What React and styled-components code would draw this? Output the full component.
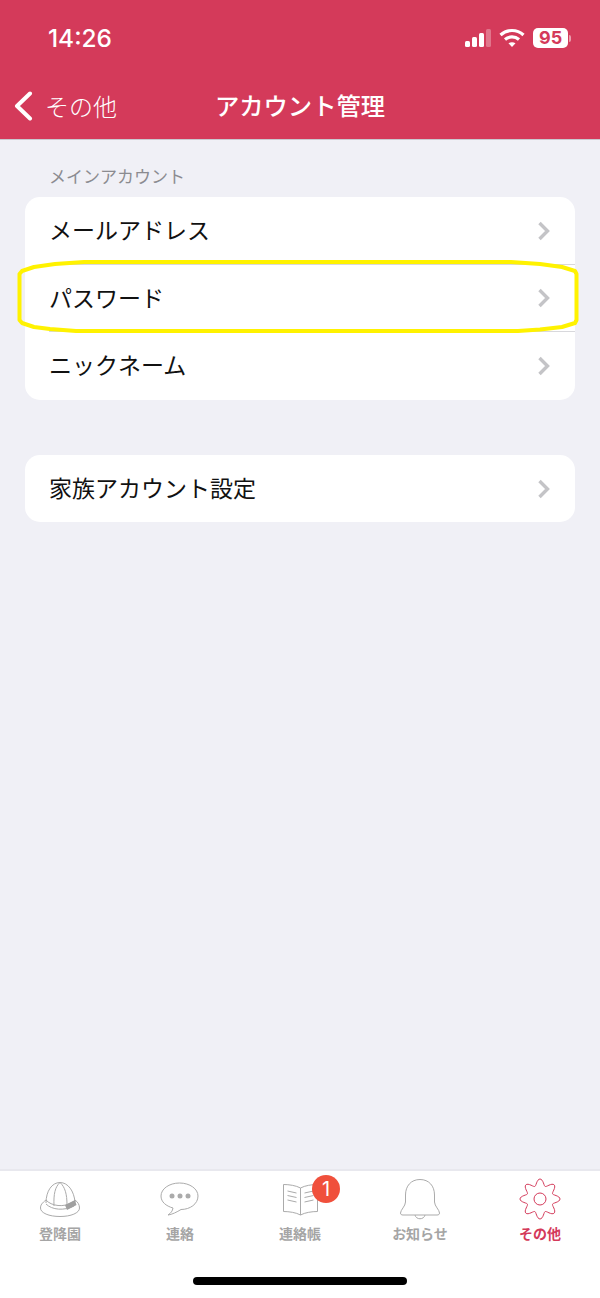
import styled, { createGlobalStyle } from "styled-components";
import { Fragment } from "react";

const Global = createGlobalStyle`
  html, body { margin: 0; padding: 0; background: #f0f0f6; }
  body { font-family: "Noto Sans CJK JP", "Noto Sans", sans-serif; }
`;

const Page = styled.div`
  width: 600px;
  height: 1298px;
  display: flex;
  flex-direction: column;
  background: #f0f0f6;
  overflow: hidden;
`;

const Header = styled.header`
  height: 140px;
  flex: none;
  background: #d43a5a;
  border-bottom: 1px solid #c9c9cf;
  box-sizing: border-box;
  color: #fff;
  display: flex;
  flex-direction: column;
`;

const StatusBar = styled.div`
  height: 76px;
  flex: none;
  display: flex;
  align-items: center;
  justify-content: space-between;
  padding: 0 29px 0 48px;
`;

const Time = styled.span`
  font-family: Inter, sans-serif;
  font-size: 24.4px;
  font-weight: 500;
`;

const StatusIcons = styled.div`
  display: flex;
  align-items: center;
  gap: 8px;
`;

const Battery = styled.div`
  display: flex;
  align-items: center;
  gap: 1px;
`;

const BatteryBody = styled.span`
  width: 35px;
  height: 20px;
  border-radius: 5px;
  background: #fff;
  color: #d43a5a;
  font-family: Inter, sans-serif;
  font-size: 18px;
  font-weight: 700;
  line-height: 20px;
  text-indent: 6px;
`;

const BatteryTip = styled.span`
  width: 2px;
  height: 7px;
  border-radius: 0 2px 2px 0;
  background: rgba(255, 255, 255, 0.5);
`;

const NavBar = styled.nav`
  position: relative;
  flex: 1;
  display: flex;
  align-items: center;
  justify-content: center;
  padding-bottom: 6px;
`;

const BackLink = styled.div`
  position: absolute;
  left: 13px;
  top: 12px;
  display: flex;
  align-items: center;
  gap: 12px;
  font-size: 24px;
  font-weight: 300;
  line-height: 36px;
`;

const Title = styled.h1`
  margin: 0;
  font-size: 24.3px;
  font-weight: 500;
  line-height: 36px;
`;

const Content = styled.main`
  flex: 1;
  padding: 24px 25px 0;
  display: flex;
  flex-direction: column;
`;

const SectionLabel = styled.div`
  padding-left: 24px;
  font-size: 17px;
  line-height: 24px;
  color: #8b8b90;
  margin-bottom: 9px;
`;

const Card = styled.div`
  background: #fff;
  border-radius: 15px;
  overflow: hidden;
  margin-bottom: ${(p) => p.$gap || 0}px;
`;

const Row = styled.div`
  height: 67.6px;
  display: flex;
  align-items: center;
  justify-content: space-between;
  padding: 0 24px 0 24px;
  font-size: 23px;
  color: #111;
`;

const RowLabel = styled.span`
  padding-bottom: 3px;
`;

const Divider = styled.div`
  height: 1px;
  margin-left: 24px;
  margin-top: -1px;
  background: #d8d8dc;
`;

const HighlightMark = styled.svg`
  position: absolute;
  left: 0;
  top: 256px;
  pointer-events: none;
`;

const TabBar = styled.footer`
  position: relative;
  height: 129px;
  flex: none;
  box-sizing: border-box;
  background: #fff;
  border-top: 2px solid #e8e8ee;
  display: grid;
  grid-template-columns: repeat(5, 120px);
`;

const Tab = styled.div`
  position: relative;
  display: flex;
  flex-direction: column;
  align-items: center;
  height: 76px;
  padding-top: 8px;
  box-sizing: border-box;
  color: ${(p) => (p.$active ? "#d43a5a" : "#a5a5a5")};
`;

const TabIcon = styled.svg`
  width: 40px;
  height: 40px;
  flex: none;
  overflow: visible;
`;

const TabLabel = styled.span`
  margin-top: 4px;
  font-size: 14px;
  line-height: 20px;
  font-weight: 700;
`;

const Badge = styled.span`
  position: absolute;
  left: 72px;
  top: 4px;
  width: 28px;
  height: 28px;
  border-radius: 50%;
  background: #f0503c;
  color: #fff;
  font-family: Inter, sans-serif;
  font-size: 20px;
  line-height: 28px;
  text-align: center;
`;

const HomeIndicator = styled.div`
  position: absolute;
  left: 193px;
  top: 106px;
  width: 214px;
  height: 8px;
  border-radius: 4px;
  background: #000;
`;

const Chevron = () => (
  <svg width="14" height="20" viewBox="0 0 14 20" fill="none">
    <path d="M2.500 2 L10.500 10 L2.500 18" stroke="#c4c4c7" strokeWidth="3.400" />
  </svg>
);

const HatIcon = () => (
  <TabIcon viewBox="0 0 40 40" fill="none" stroke="#ababab" strokeWidth="1">
    <path d="M6 24 C6 12 12 3.500 20 3.500 C28 3.500 34 12 35 23" />
    <path d="M20 3.500 C15 8 13.500 15 14 27 M20 3.500 C25 8 27 15 27 26" />
    <path d="M6 21 C11 27 24 29 33 23 M6 25 C12 31 24 32 34 27" />
    <path d="M6 21 C2 24 0.500 26 0.500 29 C0.500 34 9 37.500 20 37.500 C31 37.500 39.500 34 39.500 29 C39.500 26 38 23 35 21" />
    <path d="M25 26 L35 21 L36.500 26 L27 31 Z" fill="#a0a0a0" stroke="none" />
  </TabIcon>
);

const ChatIcon = () => (
  <TabIcon viewBox="0 0 40 40" fill="none" stroke="#ababab" strokeWidth="1">
    <path d="M19.500 4 C30 4 38 10 38 17 C38 25 30 30.500 21 30.500 C17 33 12 35.500 8 36 C11 34 12.500 32 13 29 C6 27 1 23 1 17 C1 10 9 4 19.500 4 Z" />
    <circle cx="12" cy="17" r="2.500" fill="#ababab" stroke="none" />
    <circle cx="20" cy="17" r="2.500" fill="#ababab" stroke="none" />
    <circle cx="28" cy="17" r="2.500" fill="#ababab" stroke="none" />
  </TabIcon>
);

const BookIcon = () => (
  <TabIcon viewBox="0 0 40 40" fill="none" stroke="#ababab" strokeWidth="1">
    <path d="M20.500 9 C16 6.500 9 5.500 3.500 5.500 L3.500 32.500 C9 32.500 16 33.500 20.500 36 C25 33.500 32 32.500 37.500 32.500 L37.500 5.500 C32 5.500 25 6.500 20.500 9 Z" />
    <path d="M20.500 9 L20.500 36" />
    <path d="M7.500 12 L16.500 14 M7.500 16.500 L16.500 18.500 M7.500 21 L16.500 23 M24.500 14 L33.500 12 M24.500 18.500 L33.500 16.500 M24.500 23 L33.500 21" />
  </TabIcon>
);

const BellIcon = () => (
  <TabIcon viewBox="0 0 40 40" fill="none" stroke="#ababab" strokeWidth="1">
    <path d="M20 0.500 C11 0.500 5.500 7 5.500 16 L5.500 23 C5.500 27 0.500 31 0.500 34 C0.500 35.500 1.500 36 3 36 L37 36 C38.500 36 39.500 35.500 39.500 34 C39.500 31 34.500 27 34.500 23 L34.500 16 C34.500 7 29 0.500 20 0.500 Z" />
    <path d="M15 36 C16 41 24 41 25 36" />
  </TabIcon>
);

// eight rounded teeth around the hub
const gearPath = Array.from({ length: 121 }, (_, i) => {
  const a = (i / 120) * Math.PI * 2;
  const r = 16.800 + 3.200 * Math.cos(8 * a);
  const x = 20 + r * Math.sin(a);
  const y = 20 - r * Math.cos(a);
  return `${i === 0 ? "M" : "L"}${x.toFixed(2)} ${y.toFixed(2)}`;
}).join(" ");

const GearIcon = () => (
  <TabIcon viewBox="0 0 40 40" fill="none" stroke="#d43a5a" strokeWidth="1">
    <circle cx="20" cy="20" r="6" />
    <path d={gearPath} />
  </TabIcon>
);

const tabs = [
  { label: "登降園", Icon: HatIcon },
  { label: "連絡", Icon: ChatIcon },
  { label: "連絡帳", Icon: BookIcon, badge: 1 },
  { label: "お知らせ", Icon: BellIcon },
  { label: "その他", Icon: GearIcon, active: true },
];

const mainRows = ["メールアドレス", "パスワード", "ニックネーム"];

export default function App() {
  return (
    <Page>
      <Global />
      <Header>
        <StatusBar>
          <Time>14:26</Time>
          <StatusIcons>
            <svg width="26" height="18" viewBox="0 0 26 18" fill="#fff">
              <rect x="0" y="12" width="5" height="6" rx="1.500" />
              <rect x="7" y="8" width="5" height="10" rx="1.500" />
              <rect x="14" y="4" width="5" height="14" rx="1.500" />
              <rect x="21" y="0" width="5" height="18" rx="1.500" opacity="0.3" />
            </svg>
            <svg width="26" height="20" viewBox="0 0 26 20" fill="none" stroke="#fff" strokeWidth="3.200">
              <path d="M1.500 7 C8 1 18 1 24.500 7" />
              <path d="M6 11.500 C10 8 16 8 20 11.500" />
              <path d="M13 19 L9.500 15.300 C11.500 13.800 14.500 13.800 16.500 15.300 Z" fill="#fff" stroke="none" />
            </svg>
            <Battery>
              <BatteryBody>95</BatteryBody>
              <BatteryTip />
            </Battery>
          </StatusIcons>
        </StatusBar>
        <NavBar>
          <BackLink>
            <svg width="20" height="30" viewBox="0 0 20 30" fill="none">
              <path d="M17 2.500 L4 15 L17 27.500" stroke="#fff" strokeWidth="4" strokeLinecap="round" strokeLinejoin="round" />
            </svg>
            その他
          </BackLink>
          <Title>アカウント管理</Title>
        </NavBar>
      </Header>
      <Content>
        <SectionLabel>メインアカウント</SectionLabel>
        <Card $gap={55}>
          {mainRows.map((label, i) => (
            <Fragment key={label}>
              {i > 0 && <Divider />}
              <Row>
                <RowLabel>{label}</RowLabel>
                <Chevron />
              </Row>
            </Fragment>
          ))}
        </Card>
        <Card>
          <Row>
            <RowLabel>家族アカウント設定</RowLabel>
            <Chevron />
          </Row>
        </Card>
      </Content>
      <HighlightMark width="600" height="84" viewBox="0 0 600 84" fill="none">
        <path
          d="M84 6 L511 6 L540 8 L562 11 L575 15 L576.500 18 L576.500 64 L575 67 L562 71 L540 73.500 L518 75 L76 75 L50 73 L34 71 L22 67 L19.500 64 L19.500 18 L22 15 L34 11 L55 8 Z"
          stroke="#fff200"
          strokeWidth="4"
          strokeLinejoin="round"
        />
      </HighlightMark>
      <TabBar>
        {tabs.map(({ label, Icon, badge, active }) => (
          <Tab key={label} $active={active}>
            <Icon />
            <TabLabel>{label}</TabLabel>
            {badge && <Badge>{badge}</Badge>}
          </Tab>
        ))}
        <HomeIndicator />
      </TabBar>
    </Page>
  );
}
